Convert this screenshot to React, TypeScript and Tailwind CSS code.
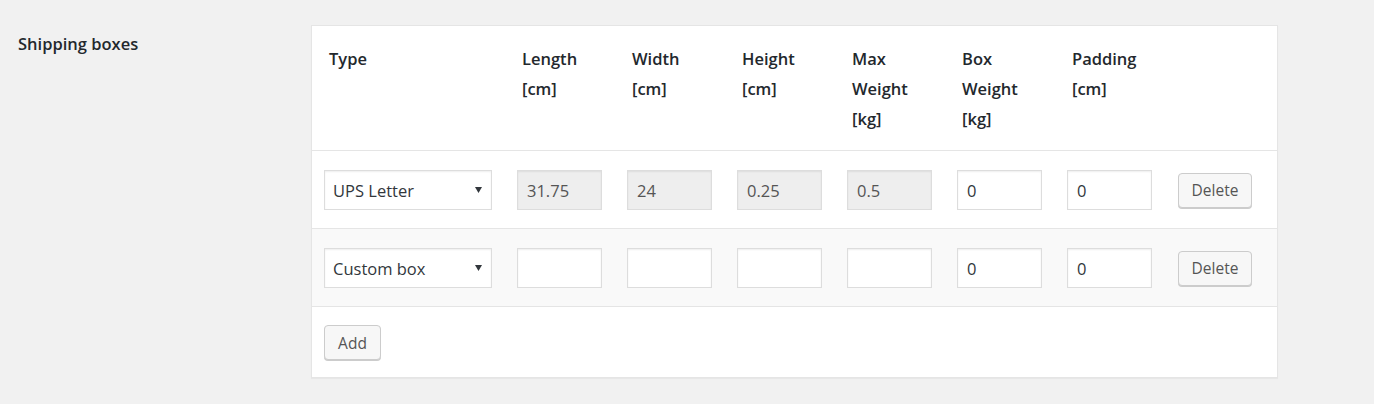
import React from "react";

type Row = {
  type: string;
  dims: string[];
  readOnly: boolean;
  boxWeight: string;
  padding: string;
};

const rows: Row[] = [
  { type: "UPS Letter", dims: ["31.75", "24", "0.25", "0.5"], readOnly: true, boxWeight: "0", padding: "0" },
  { type: "Custom box", dims: ["", "", "", ""], readOnly: false, boxWeight: "0", padding: "0" },
];

const cols = "grid grid-cols-[168px_85px_85px_85px_85px_85px_85px_74px] gap-x-[25px]";

function Field({ value, readOnly }: { value: string; readOnly?: boolean }) {
  return (
    <div
      className={
        "h-[40px] w-[85px] border flex items-center pl-[9px] pt-[3px] text-[16.5px] shadow-[inset_0_1px_2px_rgba(0,0,0,0.07)] " +
        (readOnly
          ? "bg-[#eeeeee] border-[#dddddd] text-[#555555]"
          : "bg-white border-[#dddddd] text-[#32373c]")
      }
    >
      {value}
    </div>
  );
}

function Select({ value }: { value: string }) {
  return (
    <div className="h-[40px] w-[168px] border border-[#dddddd] bg-white flex items-center justify-between pl-[8px] pr-[9px] text-[16.5px] text-[#32373c] shadow-[inset_0_1px_2px_rgba(0,0,0,0.07)]">
      <span className="pt-[3px]">{value}</span>
      <svg width="7" height="6" viewBox="0 0 7 6">
        <polygon points="0,0 7,0 3.5,6" fill="#32373c" />
      </svg>
    </div>
  );
}

function Button({ label, w }: { label: string; w: string }) {
  return (
    <button
      className={
        "h-[35px] rounded-[4px] border border-[#cccccc] bg-[#f7f7f7] text-[#555555] text-[15.5px] pt-[2px] shadow-[0_1px_0_#cccccc] flex items-center justify-center " +
        w
      }
    >
      {label}
    </button>
  );
}

export default function App() {
  const headers: React.ReactNode[] = [
    "Type",
    <>Length<br />[cm]</>,
    <>Width<br />[cm]</>,
    <>Height<br />[cm]</>,
    <>Max<br />Weight<br />[kg]</>,
    <>Box<br />Weight<br />[kg]</>,
    <>Padding<br />[cm]</>,
    "",
  ];

  return (
    <div className="min-h-screen bg-[#f1f1f1] flex pl-[18px] pt-[25px] font-['Open_Sans',sans-serif]">
      <div className="w-[293px] pt-[7px] text-[16.5px] leading-[24px] font-semibold text-[#23282d]">
        Shipping boxes
      </div>

      <div className="w-[967px] h-[353px] bg-white border border-[#e5e5e5] shadow-[0_1px_1px_rgba(0,0,0,0.04)] flex flex-col">
        {/* header */}
        <div className={cols + " pl-[17px] pt-[18px] pb-[16px] border-b border-[#e5e5e5] text-[16.5px] leading-[30px] font-semibold text-[#23282d]"}>
          {headers.map((h, i) => (
            <div key={i}>{h}</div>
          ))}
        </div>

        {rows.map((r, i) => (
          <div
            key={i}
            className={
              cols +
              " items-center pl-[12px] h-[78px] border-b border-[#e5e5e5] " +
              (i % 2 === 1 ? "bg-[#f9f9f9]" : "bg-white")
            }
          >
            <Select value={r.type} />
            {r.dims.map((d, j) => (
              <Field key={j} value={d} readOnly={r.readOnly} />
            ))}
            <Field value={r.boxWeight} />
            <Field value={r.padding} />
            <div className="pl-[1px] pt-[1px]">
              <Button label="Delete" w="w-[74px]" />
            </div>
          </div>
        ))}

        <div className="pl-[12px] pt-[18px]">
          <Button label="Add" w="w-[57px]" />
        </div>
      </div>
    </div>
  );
}
